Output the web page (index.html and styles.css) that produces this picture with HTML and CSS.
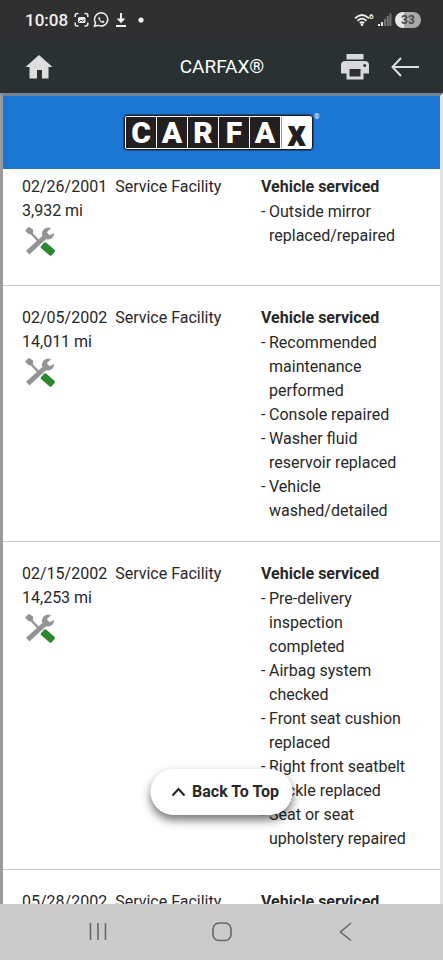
FILE: index.html
```html
<!DOCTYPE html>
<html lang="en">
<head>
<meta charset="utf-8">
<meta name="viewport" content="width=device-width, initial-scale=1">
<title>CARFAX®</title>
<link rel="stylesheet" href="styles.css">
</head>
<body>
<svg class="defs" aria-hidden="true">
  <symbol id="tools" viewBox="0 0 32 32">
    <path d="M5.500 5.500 14.500 15" fill="none" stroke="#949494" stroke-width="2.400"/>
    <path d="M1 4.500 5 .8 9.200 3.800 8.800 8.200 4.800 8.200Z" fill="#949494"/>
    <path d="M3.700 26.700 22.500 9.500" fill="none" stroke="#949494" stroke-width="5"/>
    <path d="M27 2.300A6 6 0 1 0 30 7L25.500 9.200 22.800 6.300Z" fill="#949494"/>
    <path d="M22 16.500 30.500 23.700Q31.500 24.700 30.700 25.800L27.800 29.300Q26.800 30.300 25.700 29.400L17 22Q16.200 21 17 20.200L20 16.800Q21 15.800 22 16.500Z" fill="#2c872e"/>
  </symbol>
</svg>
<div class="status">
  <span class="time">10:08</span>
  <svg class="notices" viewBox="0 0 72 16" width="72" height="16" fill="none" stroke="#f0f0f0" stroke-width="1.500" aria-hidden="true">
    <path d="M1.200 5V3.500Q1.200 1.500 3.200 1.500H4.500M10.500 1.500H11.800Q13.800 1.500 13.800 3.500V5M13.800 10.500V12Q13.800 14 11.800 14H10.500M4.500 14H3.200Q1.200 14 1.200 12V10.500"/>
    <rect x="4" y="5" width="7.500" height="6" rx="1.500" fill="#f0f0f0" stroke="none"/>
    <path d="M5 10 7 8 8.500 9.500 10 7.500" stroke="#303030" stroke-width="1"/>
    <path d="M20.500 14.200 21.500 10.800A6.600 6.600 0 1 1 24.200 13.300Z"/>
    <path d="M25 4.800Q24 5.500 24.400 6.900 25.600 9.900 28.700 10.900 30.300 11 30.500 9.500L28.700 8.500 27.800 9.400Q26.300 8.600 25.800 7.300L26.500 6.500Z" fill="#f0f0f0" stroke="none"/>
    <path d="M47 1V9M42 14H52" stroke-width="2"/>
    <path d="M42.700 6.500H51.300L47 11.200Z" fill="#f0f0f0" stroke="none"/>
    <circle cx="67" cy="8" r="2.600" fill="#f0f0f0" stroke="none"/>
  </svg>
  <svg class="signal" viewBox="0 0 38 16" width="38" height="16" aria-hidden="true">
    <g fill="none" stroke="#f0f0f0" stroke-width="1.800"><path d="M1 6.300Q8 -.3 15 6.300M3.500 8.800Q8 4.500 12.500 8.800M5.800 11.200Q8 9.200 10.200 11.200"/></g>
    <circle cx="8" cy="12.800" r="1.300" fill="#f0f0f0"/>
    <text x="15" y="7" class="band">6</text>
    <path d="M24 12h2v2h-2zM27 10h2v4h-2z" fill="#f0f0f0"/>
    <path d="M30 7h2v7h-2zM32.700 4h2v10h-2zM35.400 1.500h2v12.500h-2z" fill="#777"/>
  </svg>
  <span class="battery">33</span>
</div>
<header class="appbar">
  <a class="tool" href="#home" aria-label="Home"><svg viewBox="0 0 28 26" width="28" height="26"><path d="M14 1 27.500 13H23.500V24.500H17V16H12V24.500H4.500V13H.5Z" fill="#dedede"/></svg></a>
  <h1>CARFAX®</h1>
  <button class="tool" type="button" aria-label="Print"><svg viewBox="0 0 28 26" width="28" height="26"><path fill="#d8d9d9" fill-rule="evenodd" d="M5.500 0H22.500V5.500H5.500ZM4.500 7H23.500Q28 7 28 11V19.500H22.500V25.500H5.500V19.500H0V11Q0 7 4.500 7ZM8.500 15V22.500H19.500V15ZM23.700 10A1.500 1.500 0 1 0 23.700 13 1.500 1.500 0 0 0 23.700 10Z"/></svg></button>
  <button class="tool" type="button" aria-label="Back"><svg viewBox="0 0 28 20" width="28" height="20"><path d="M10 1 1.500 10 10 19M1.500 10H28" fill="none" stroke="#dedede" stroke-width="2"/></svg></button>
</header>
<main>
  <div class="banner">
    <div class="logo" role="img" aria-label="CARFAX"><span>C</span><span>A</span><span>R</span><span>F</span><span>A</span><span class="last">x</span><small>®</small></div>
  </div>
  <article class="record first">
    <div class="source"><div class="line"><time>02/26/2001</time><span>Service Facility</span></div><div>3,932 mi</div><svg class="tools"><use href="#tools"/></svg></div>
    <div class="details"><h2>Vehicle serviced</h2><ul><li>Outside mirror replaced/repaired</li></ul></div>
  </article>
  <article class="record">
    <div class="source"><div class="line"><time>02/05/2002</time><span>Service Facility</span></div><div>14,011 mi</div><svg class="tools"><use href="#tools"/></svg></div>
    <div class="details"><h2>Vehicle serviced</h2><ul><li>Recommended maintenance performed</li><li>Console repaired</li><li>Washer fluid reservoir replaced</li><li>Vehicle washed/detailed</li></ul></div>
  </article>
  <article class="record">
    <div class="source"><div class="line"><time>02/15/2002</time><span>Service Facility</span></div><div>14,253 mi</div><svg class="tools"><use href="#tools"/></svg></div>
    <div class="details"><h2>Vehicle serviced</h2><ul><li>Pre-delivery inspection completed</li><li>Airbag system checked</li><li>Front seat cushion replaced</li><li>Right front seatbelt buckle replaced</li><li>Seat or seat upholstery repaired</li></ul></div>
  </article>
  <article class="record">
    <div class="source"><div class="line"><time>05/28/2002</time><span>Service Facility</span></div></div>
    <div class="details"><h2>Vehicle serviced</h2></div>
  </article>
  <button class="totop" type="button"><svg viewBox="0 0 14 10" width="14" height="10"><path d="M1 8.500 7 2 13 8.500" fill="none" stroke="#222" stroke-width="2"/></svg>Back To Top</button>
</main>
<nav aria-label="System">
  <button type="button" aria-label="Recents"><svg viewBox="0 0 20 20" width="20" height="20"><path d="M2.500 1V18M10 1V18M17.500 1V18" stroke="#686868" stroke-width="1.600"/></svg></button>
  <button type="button" aria-label="Home"><svg viewBox="0 0 20 20" width="20" height="20"><rect x="1" y="1" width="18" height="17.500" rx="6" fill="none" stroke="#686868" stroke-width="1.600"/></svg></button>
  <button type="button" aria-label="Back"><svg viewBox="0 0 20 20" width="20" height="20"><path d="M15 1 4.500 10 15 18.500" fill="none" stroke="#686868" stroke-width="1.600"/></svg></button>
</nav>
</body>
</html>
```
FILE: styles.css
```css
* { box-sizing: border-box; }
body {
  margin: 0;
  height: 100vh;
  display: flex;
  flex-direction: column;
  font: 16px/24px Roboto, sans-serif;
  color: #282828;
  background: #fff;
}
h1, h2, ul { margin: 0; padding: 0; font-size: inherit; }
button { border: 0; padding: 0; background: none; font: inherit; color: inherit; }
svg { display: block; }
.defs { position: absolute; width: 0; height: 0; }

.status {
  flex: none;
  height: 40px;
  display: flex;
  align-items: center;
  padding: 0 22px 0 25px;
  background: #303030;
  color: #f0f0f0;
}
.time { font-size: 17px; font-weight: 500; margin-right: 6px; }
.signal { margin-left: auto; margin-right: 3px; }
.band { font: bold 8px Roboto, sans-serif; fill: #f0f0f0; }
.battery {
  width: 26px;
  border-radius: 8px;
  background: linear-gradient(90deg, #e8e8e8 33%, #a8a8a8 33%);
  color: #4a4a4a;
  font-size: 12px;
  font-weight: 700;
  line-height: 16px;
  text-align: center;
}

.appbar {
  flex: none;
  height: 53px;
  display: grid;
  grid-template-columns: 78px 1fr 28px 28px;
  column-gap: 22px;
  align-items: center;
  padding: 0 24px 0 25px;
  background: linear-gradient(#293133 85%, #2e2f32);
  color: #fff;
}
.appbar h1 { font-size: 19px; font-weight: 400; text-align: center; }
.tool { width: 28px; }

main {
  position: relative;
  flex: 1;
  min-height: 0;
  overflow: hidden;
  border-top: 3px solid #718496;
  border-left: 3px solid #9b9b9b;
  border-right: 3px solid #e4e4e4;
}
.banner {
  height: 73px;
  display: flex;
  justify-content: center;
  align-items: center;
  padding-right: 6px;
  background: #1b76d3;
}
.logo {
  position: relative;
  display: flex;
  gap: 1px;
  padding: 1px;
  border: 1px solid #231f20;
  border-radius: 3px;
  background: #fff;
  outline: 1px solid #174d86;
}
.logo span {
  width: 30px;
  height: 31px;
  background: #231f20;
  color: #fff;
  font: 900 30px/32px Roboto, sans-serif;
  text-align: center;
}
.logo .last { background: #fff; color: #231f20; font-size: 36px; line-height: 34px; border-left: 1px solid #999; }
.logo small { position: absolute; left: 100%; top: -3px; margin-left: 2px; color: #fff; font-size: 7px; line-height: 8px; }

.record {
  display: grid;
  grid-template-columns: 239px 1fr;
  padding: 20px 20px 18px 19px;
  border-bottom: 1px solid #cbcbcb;
}
.first { padding-top: 6px; }
.line { display: flex; gap: 8px; }
.tools { width: 32px; height: 32px; margin: 3px 0 9px 2px; }
.details h2 { font-weight: 700; margin-bottom: 1px; }
.details ul { list-style: none; }
.details li { padding-left: 8px; position: relative; }
.details li::before { content: "-"; position: absolute; left: 0; }

.totop {
  position: absolute;
  left: 50%;
  bottom: 89px;
  transform: translateX(-50%);
  display: flex;
  align-items: center;
  gap: 7px;
  height: 46px;
  padding: 0 14px 0 21px;
  border-radius: 23px;
  background: #fff;
  box-shadow: 0 5px 10px rgba(0, 0, 0, .55);
  font-weight: 700;
  white-space: nowrap;
}

nav {
  flex: none;
  height: 56px;
  display: flex;
  justify-content: center;
  gap: 104px;
  background: #cbcbcb;
}
```
